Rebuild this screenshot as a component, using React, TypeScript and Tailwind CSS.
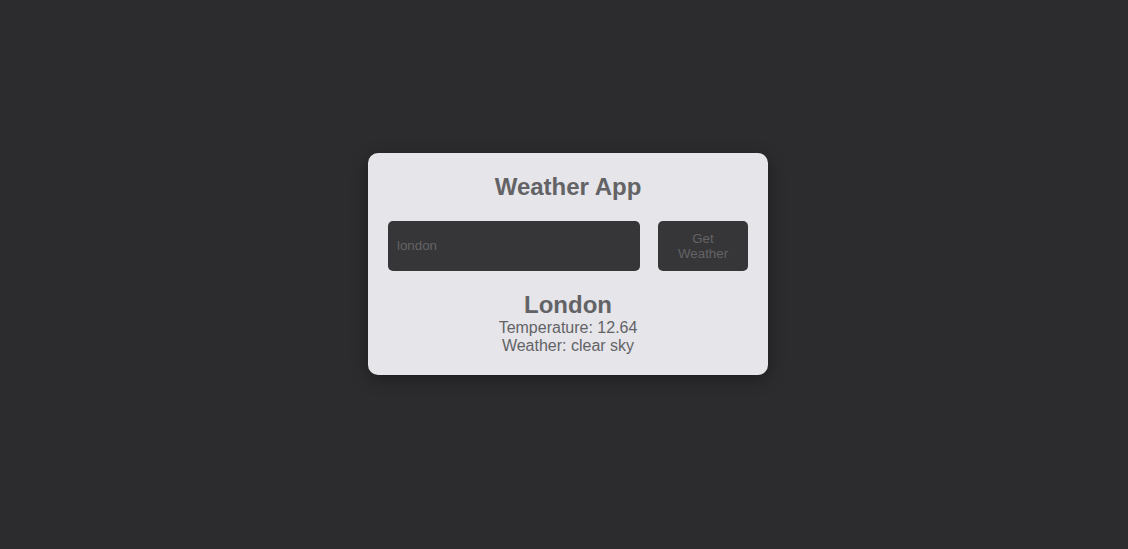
import React, { useState } from "react";

const App: React.FC = () => {
  const [city, setCity] = useState("london");

  return (
    <div
      className="min-h-screen w-full bg-[#2c2c2e] flex items-center justify-center pl-2 pb-[22px]"
      style={{ fontFamily: '"Liberation Sans", Arial, sans-serif' }}
    >
      <div className="w-[400px] rounded-[10px] bg-[#e5e5ea] p-5 text-center text-[#636366] shadow-[0_4px_16px_rgba(0,0,0,0.35)]">
        <h2 className="text-2xl font-bold leading-[normal] mb-5">Weather App</h2>

        {/* Search */}
        <div className="flex items-stretch gap-[18px]">
          <input
            value={city}
            onChange={(e) => setCity(e.target.value)}
            className="flex-1 h-[50px] rounded-[5px] bg-[#363638] px-[9px] text-[13.33px] text-[#636366] outline-none"
          />
          <button className="w-[90px] h-[50px] rounded-[5px] bg-[#363638] px-5 text-[13.33px] leading-[normal] text-[#636366]">
            Get Weather
          </button>
        </div>

        {/* Result */}
        <div className="mt-5">
          <h3 className="text-2xl font-bold leading-[normal]">London</h3>
          <p className="text-base leading-[normal]">Temperature: 12.64</p>
          <p className="text-base leading-[normal]">Weather: clear sky</p>
        </div>
      </div>
    </div>
  );
};

export default App;
